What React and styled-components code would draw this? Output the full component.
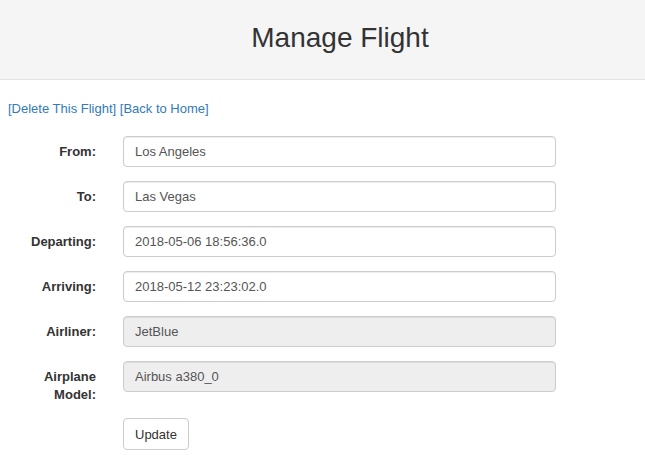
import React from 'react';
import styled, { createGlobalStyle } from 'styled-components';

const GlobalStyle = createGlobalStyle`
  html, body {
    margin: 0;
    padding: 0;
    background: #fff;
    font-family: "Liberation Sans", Arial, Helvetica, sans-serif;
    font-size: 13px;
    color: #333;
  }
`;

const Header = styled.header`
  height: 80px;
  box-sizing: border-box;
  background: #f5f5f5;
  border-bottom: 1px solid #e2e2e2;
  display: flex;
  align-items: center;
  justify-content: center;
  padding-left: 35px;
`;

const Title = styled.h1`
  margin: 0;
  font-size: 28px;
  font-weight: 500;
  color: #333;
  padding-bottom: 3px;
`;

const Content = styled.main`
  padding: 20px 8px 0;
`;

const Links = styled.div`
  line-height: 18px;
  margin-bottom: 18px;
`;

const LinkText = styled.a`
  color: #337ab7;
  text-decoration: none;
  cursor: pointer;
`;

const Form = styled.form`
  display: flex;
  flex-direction: column;
  gap: 14px;
`;

const Row = styled.div`
  display: flex;
  align-items: flex-start;
  gap: 27px;
`;

const Label = styled.label`
  width: 86px;
  margin-left: 2px;
  text-align: right;
  font-weight: 700;
  line-height: 18px;
  padding-top: 7px;
`;

const Input = styled.input`
  width: 433px;
  height: 31px;
  box-sizing: border-box;
  padding: 0 11px;
  border: 1px solid #ccc;
  border-radius: 4px;
  box-shadow: inset 0 1px 1px rgba(0, 0, 0, 0.075);
  font-family: inherit;
  font-size: 13px;
  color: #555;
  background: ${(p) => (p.disabled ? '#eee' : '#fff')};
  outline: none;
`;

const Button = styled.button`
  height: 32px;
  padding: 0 11px;
  border: 1px solid #ccc;
  border-radius: 4px;
  background: #fff;
  font-family: inherit;
  font-size: 13px;
  color: #333;
`;

const Spacer = styled.div`
  width: 88px;
`;

const fields = [
  { label: 'From:', value: 'Los Angeles' },
  { label: 'To:', value: 'Las Vegas' },
  { label: 'Departing:', value: '2018-05-06 18:56:36.0' },
  { label: 'Arriving:', value: '2018-05-12 23:23:02.0' },
  { label: 'Airliner:', value: 'JetBlue', disabled: true },
  { label: 'Airplane Model:', value: 'Airbus a380_0', disabled: true },
];

const App = () => {
  return (
    <>
      <GlobalStyle />
      <Header>
        <Title>Manage Flight</Title>
      </Header>
      <Content>
        <Links>
          <LinkText>[Delete This Flight]</LinkText> <LinkText>[Back to Home]</LinkText>
        </Links>
        <Form onSubmit={(e) => e.preventDefault()}>
          {fields.map((f) => (
            <Row key={f.label}>
              <Label>{f.label}</Label>
              <Input defaultValue={f.value} disabled={f.disabled} />
            </Row>
          ))}
          <Row>
            <Spacer />
            <Button type="submit">Update</Button>
          </Row>
        </Form>
      </Content>
    </>
  );
};

export default App;
